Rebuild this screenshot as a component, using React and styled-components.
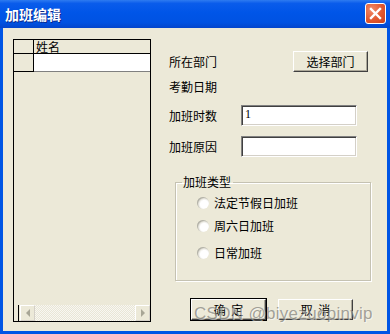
import React from "react";
import styled, { createGlobalStyle } from "styled-components";

const Global = createGlobalStyle`
  html, body { margin: 0; padding: 0; background: #ECE9D8; }
  body { font-family: "Noto Sans CJK SC", "Liberation Sans", sans-serif; }
  * { box-sizing: border-box; }
`;

const Window = styled.div`
  position: relative;
  width: 390px;
  height: 334px;
  display: flex;
  flex-direction: column;
  background: #0055E5;
  overflow: hidden;
`;

const TitleBar = styled.div`
  height: 28px;
  flex: none;
  display: flex;
  align-items: center;
  justify-content: space-between;
  padding: 0 4px 0 5px;
  background: linear-gradient(to bottom, #2E7BF0 0%, #0A5CEB 12%, #0055E8 45%, #0052E2 80%, #0345CC 100%);
`;

const Title = styled.span`
  color: #fff;
  font-size: 14px;
  font-weight: 700;
  line-height: 16px;
  text-shadow: 1px 1px 0 #0B2A8C;
`;

const CloseButton = styled.div`
  width: 21px;
  height: 21px;
  border: 1px solid #fff;
  border-radius: 3px;
  background: radial-gradient(circle at 30% 30%, #F08A6A 0%, #E2582F 55%, #C8401C 100%);
  display: flex;
  align-items: center;
  justify-content: center;
  margin-top: -2px;
`;

const Body = styled.div`
  flex: 1;
  margin: 0 3px 3px 3px;
  background: #ECE9D8;
  display: flex;
  align-items: flex-start;
  padding: 11px 0 0 10px;
`;

const GridBox = styled.div`
  width: 138px;
  height: 283px;
  border: 1px solid #000;
  background: #ECE9D8;
  display: flex;
  flex-direction: column;
`;

const GridTable = styled.div`
  display: grid;
  grid-template-columns: 20px 1fr;
  grid-template-rows: 14px 18px;
`;

const HeadCell = styled.div`
  border-right: ${p => (p.$corner ? "1px solid #000" : "none")};
  border-bottom: 1px solid #000;
  font-size: 12px;
  line-height: 13px;
  padding-left: 2px;
  color: #000;
  background: #ECE9D8;
`;

const RowHead = styled.div`
  border-right: 1px solid #000;
  border-bottom: 1px solid #000;
  background: #ECE9D8;
`;

const DataCell = styled.div`
  background: #fff;
  border-bottom: 1px solid #808080;
`;

const GridSpace = styled.div`
  flex: 1;
`;

const HScroll = styled.div`
  height: 16px;
  display: flex;
  align-items: stretch;
  padding-left: 4px;
`;

const ScrollEdge = styled.div`
  width: 1px;
  background: #000;
`;

const ScrollBtn = styled.div`
  width: 15px;
  background: #ECE9D8;
  border-top: 1px solid #fff;
  border-left: 1px solid #fff;
  border-bottom: 1px solid #D4D0C8;
  border-right: 1px solid #D4D0C8;
  display: flex;
  align-items: center;
  justify-content: center;
  margin-left: ${p => (p.$left ? "1px" : "0")};
`;

const Track = styled.div`
  flex: 1;
  background-color: #F6F5EF;
  background-image: repeating-conic-gradient(#E9E6D6 0% 25%, #F8F7F2 0% 50%);
  background-size: 2px 2px;
`;

const Arrow = styled.span`
  width: 0;
  height: 0;
  border-top: 4px solid transparent;
  border-bottom: 4px solid transparent;
  ${p => (p.$dir === "left" ? "border-right: 4px solid #A8A696;" : "border-left: 4px solid #A8A696;")}
`;

const Right = styled.div`
  margin-left: 18px;
  width: 200px;
  display: flex;
  flex-direction: column;
`;

const FormRow = styled.div`
  height: ${p => p.$h || 21}px;
  margin-top: ${p => p.$mt || 0}px;
  display: flex;
  align-items: center;
`;

const Label = styled.span`
  font-size: 12px;
  line-height: 14px;
  color: #000;
  width: ${p => p.$w || 72}px;
  flex: none;
`;

const ClassicButton = styled.div`
  width: 75px;
  height: 21px;
  background: #ECE9D8;
  border-top: 1px solid #fff;
  border-left: 1px solid #fff;
  border-right: 1px solid #404040;
  border-bottom: 1px solid #404040;
  box-shadow: inset -1px -1px 0 #ACA899;
  font-size: 12px;
  line-height: 14px;
  color: #000;
  display: flex;
  align-items: center;
  justify-content: center;
  white-space: pre;
  ${p => p.$default && "outline: 1px solid #000; outline-offset: 0px;"}
`;

const Input = styled.div`
  width: 116px;
  height: 21px;
  background: #fff;
  border-top: 1px solid #808080;
  border-left: 1px solid #808080;
  border-right: 1px solid #fff;
  border-bottom: 1px solid #fff;
  box-shadow: inset 1px 1px 0 #404040, inset -1px -1px 0 #D4D0C8;
  font-family: "Liberation Serif", serif;
  font-size: 12px;
  line-height: 17px;
  padding-left: 3px;
  color: #000;
`;

const Group = styled.fieldset`
  margin: 18px 0 0 6px;
  width: 196px;
  height: 106px;
  padding: 0;
  border: 1px solid #C5C2B2;
  box-shadow: inset 1px 1px 0 #fff, 1px 1px 0 #fff;
  display: flex;
  flex-direction: column;
`;

const Legend = styled.legend`
  font-size: 12px;
  line-height: 14px;
  padding: 0 2px 0 1px;
  margin-left: 6px;
  color: #000;
`;

const RadioRow = styled.div`
  height: 16px;
  margin-top: ${p => p.$mt}px;
  margin-left: 21px;
  display: flex;
  align-items: center;
  gap: 5px;
  font-size: 12px;
  line-height: 14px;
  color: #000;
`;

const RadioDot = styled.span`
  width: 12px;
  height: 12px;
  border-radius: 50%;
  flex: none;
  background: radial-gradient(circle at 62% 62%, #FFFFFF 0%, #FFFFFF 38%, #E4E2D8 62%, #B9B7AC 100%);
  box-shadow: inset 1px 1px 1px rgba(90, 90, 80, 0.35);
`;

const ButtonRow = styled.div`
  margin: 18px 0 0 22px;
  display: flex;
  gap: 12px;
`;

const Watermark = styled.div`
  position: absolute;
  left: 194px;
  top: 304px;
  font-family: "Liberation Sans", Arial, sans-serif;
  font-size: 17px;
  letter-spacing: 0.3px;
  color: rgba(110, 110, 105, 0.62);
  text-shadow: 1px 1px 0 rgba(255, 255, 255, 0.5);
  pointer-events: none;
  white-space: nowrap;
`;

export default function App() {
  return (
    <>
      <Global />
      <Window>
        <TitleBar>
          <Title>加班编辑</Title>
          <CloseButton>
            <svg width="13" height="13" viewBox="0 0 13 13">
              <path d="M2 2 L11 11 M11 2 L2 11" stroke="#fff" strokeWidth="2.4" strokeLinecap="square" />
            </svg>
          </CloseButton>
        </TitleBar>
        <Body>
          <GridBox>
            <GridTable>
              <HeadCell $corner />
              <HeadCell>姓名</HeadCell>
              <RowHead />
              <DataCell />
            </GridTable>
            <GridSpace />
            <HScroll>
              <ScrollEdge />
              <ScrollBtn $left>
                <Arrow $dir="left" />
              </ScrollBtn>
              <Track />
              <ScrollBtn>
                <Arrow $dir="right" />
              </ScrollBtn>
            </HScroll>
          </GridBox>
          <Right>
            <FormRow $mt={12}>
              <Label $w={124}>所在部门</Label>
              <ClassicButton>选择部门</ClassicButton>
            </FormRow>
            <FormRow $mt={5} $h={20}>
              <Label>考勤日期</Label>
            </FormRow>
            <FormRow $mt={8}>
              <Label>加班时数</Label>
              <Input>1</Input>
            </FormRow>
            <FormRow $mt={10}>
              <Label>加班原因</Label>
              <Input />
            </FormRow>
            <Group>
              <Legend>加班类型</Legend>
              <RadioRow $mt={6}>
                <RadioDot />
                法定节假日加班
              </RadioRow>
              <RadioRow $mt={7}>
                <RadioDot />
                周六日加班
              </RadioRow>
              <RadioRow $mt={11}>
                <RadioDot />
                日常加班
              </RadioRow>
            </Group>
            <ButtonRow>
              <ClassicButton $default>{"确  定"}</ClassicButton>
              <ClassicButton>{"取  消"}</ClassicButton>
            </ButtonRow>
          </Right>
        </Body>
        <Watermark>CSDN @biyezuopinvip</Watermark>
      </Window>
    </>
  );
}
